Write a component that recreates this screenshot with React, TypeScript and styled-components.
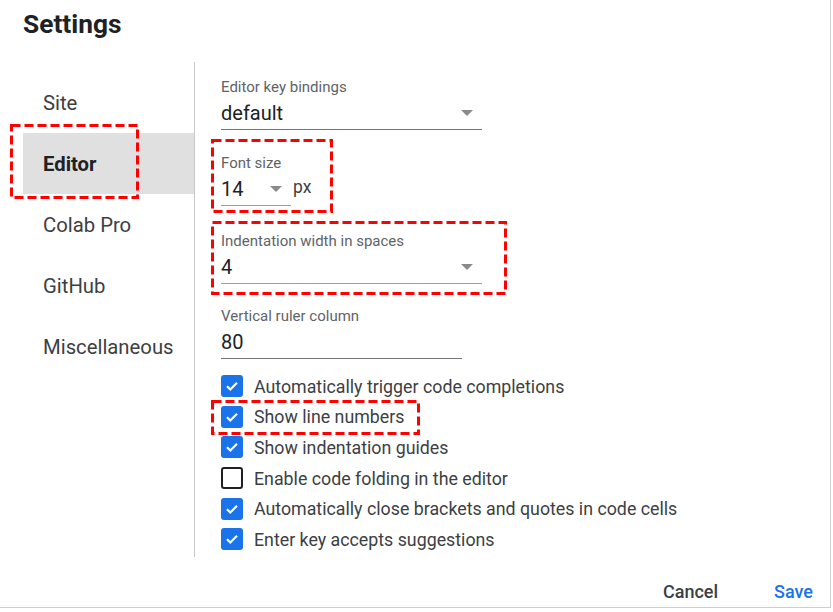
import React from "react";
import styled, { createGlobalStyle } from "styled-components";

const Global = createGlobalStyle`
  html, body { margin: 0; padding: 0; background: #ffffff; }
  body { font-family: Roboto, "Noto Sans", "Liberation Sans", sans-serif; -webkit-font-smoothing: antialiased; }
`;

const Dialog = styled.div`
  width: 831px;
  height: 608px;
  box-sizing: border-box;
  border-right: 1px solid #cfcfcf;
  border-bottom: 1px solid #cfcfcf;
  background: #fff;
  display: flex;
  flex-direction: column;
  position: relative;
`;

const Title = styled.h1`
  margin: 0;
  padding: 9px 0 0 23px;
  height: 62px;
  box-sizing: border-box;
  font-size: 26.3px;
  line-height: 30px;
  font-weight: 700;
  color: #202124;
`;

const Body = styled.div`
  display: flex;
  height: 495px;
`;

const Sidebar = styled.nav`
  width: 195px;
  box-sizing: border-box;
  border-right: 1px solid #c8c8c8;
  padding-top: 10px;
  padding-left: 23px;
  display: flex;
  flex-direction: column;
`;

const NavItem = styled.div<{ $active?: boolean }>`
  position: relative;
  height: 61px;
  display: flex;
  align-items: center;
  padding-left: 20px;
  font-size: 20.3px;
  color: ${(p) => (p.$active ? "#202124" : "#3c4043")};
  font-weight: ${(p) => (p.$active ? 700 : 400)};
  background: ${(p) => (p.$active ? "#e0e0e0" : "transparent")};
`;

const Content = styled.div`
  flex: 1;
  padding: 16px 0 0 26px;
  display: flex;
  flex-direction: column;
`;

const Field = styled.div<{ $gap?: number }>`
  position: relative;
  margin-top: ${(p) => p.$gap ?? 0}px;
  display: flex;
  flex-direction: column;
  align-items: flex-start;
`;

const Label = styled.div`
  font-size: 15px;
  line-height: 18px;
  color: #5f6368;
`;

const ValueRow = styled.div`
  display: flex;
  align-items: center;
`;

const Select = styled.div<{ $width: number; $line?: string }>`
  width: ${(p) => p.$width}px;
  box-sizing: border-box;
  display: flex;
  align-items: center;
  justify-content: space-between;
  padding: 4px 9px 3px 0;
  height: 34px;
  border-bottom: 1px solid ${(p) => p.$line ?? "#757575"};
  font-size: 20px;
  line-height: 26px;
  color: #202124;
`;

const Arrow = styled.span`
  width: 0;
  height: 0;
  border-left: 6px solid transparent;
  border-right: 6px solid transparent;
  border-top: 6px solid #8a8a8a;
`;

const Unit = styled.span`
  font-size: 17.5px;
  color: #3c4043;
  margin-left: 2px;
  padding-bottom: 4px;
`;

const Checks = styled.div`
  margin-top: 12px;
  display: flex;
  flex-direction: column;
`;

const CheckRow = styled.label`
  position: relative;
  height: 30.6px;
  display: flex;
  align-items: center;
  font-size: 17.8px;
  color: #3c4043;
  align-self: flex-start;
`;

const Box = styled.span<{ $checked: boolean }>`
  width: 22px;
  height: 22px;
  box-sizing: border-box;
  border-radius: 3px;
  margin-right: 11px;
  display: inline-flex;
  align-items: center;
  justify-content: center;
  background: ${(p) => (p.$checked ? "#1a73e8" : "#fff")};
  border: ${(p) => (p.$checked ? "none" : "2.5px solid #202124")};
`;

const Footer = styled.div`
  flex: 1;
  display: flex;
  justify-content: flex-end;
  align-items: flex-start;
  padding: 24px 17px 0 0;
  gap: 56px;
`;

const Button = styled.button<{ $primary?: boolean }>`
  border: none;
  background: none;
  padding: 0;
  font-family: inherit;
  font-size: 18px;
  line-height: 22px;
  font-weight: 500;
  color: ${(p) => (p.$primary ? "#1a73e8" : "#3c4043")};
`;

const Mark = styled.svg`
  position: absolute;
  pointer-events: none;
  overflow: visible;
`;

function RedBox({ x, y, w, h }: { x: number; y: number; w: number; h: number }) {
  return (
    <Mark style={{ left: x, top: y, width: w, height: h }} width={w} height={h}>
      <rect
        x={1.5}
        y={1.5}
        width={w - 3}
        height={h - 3}
        fill="none"
        stroke="#ff0000"
        strokeWidth={3}
        strokeDasharray="9 4"
      />
    </Mark>
  );
}

function Check({ checked, children, hl }: { checked: boolean; children: React.ReactNode; hl?: boolean }) {
  return (
    <CheckRow>
      <Box $checked={checked}>
        {checked && (
          <svg width="16" height="16" viewBox="0 0 16 16">
            <path d="M3 8.2l3.3 3.3L13 4.8" fill="none" stroke="#fff" strokeWidth="2.2" />
          </svg>
        )}
      </Box>
      {children}
      {hl && <RedBox x={-10} y={-2} w={209} h={35} />}
    </CheckRow>
  );
}

export default function App() {
  return (
    <>
      <Global />
      <Dialog>
        <Title>Settings</Title>
        <Body>
          <Sidebar>
            <NavItem>Site</NavItem>
            <NavItem $active>
              Editor
              <RedBox x={-13} y={-9} w={129} h={75} />
            </NavItem>
            <NavItem>Colab Pro</NavItem>
            <NavItem>GitHub</NavItem>
            <NavItem>Miscellaneous</NavItem>
          </Sidebar>
          <Content>
            <Field>
              <Label>Editor key bindings</Label>
              <Select $width={261}>
                default
                <Arrow />
              </Select>
            </Field>
            <Field $gap={24}>
              <Label>Font size</Label>
              <ValueRow>
                <Select $width={70} $line="#9e9e9e">
                  14
                  <Arrow />
                </Select>
                <Unit>px</Unit>
              </ValueRow>
              <RedBox x={-10} y={-15} w={122} h={74} />
            </Field>
            <Field $gap={26}>
              <Label>Indentation width in spaces</Label>
              <Select $width={261} $line="#9e9e9e">
                4
                <Arrow />
              </Select>
              <RedBox x={-10} y={-11} w={296} h={74} />
            </Field>
            <Field $gap={23}>
              <Label>Vertical ruler column</Label>
              <Select $width={241}>80</Select>
            </Field>
            <Checks>
              <Check checked>Automatically trigger code completions</Check>
              <Check checked hl>
                Show line numbers
              </Check>
              <Check checked>Show indentation guides</Check>
              <Check checked={false}>Enable code folding in the editor</Check>
              <Check checked>Automatically close brackets and quotes in code cells</Check>
              <Check checked>Enter key accepts suggestions</Check>
            </Checks>
          </Content>
        </Body>
        <Footer>
          <Button>Cancel</Button>
          <Button $primary>Save</Button>
        </Footer>
      </Dialog>
    </>
  );
}
